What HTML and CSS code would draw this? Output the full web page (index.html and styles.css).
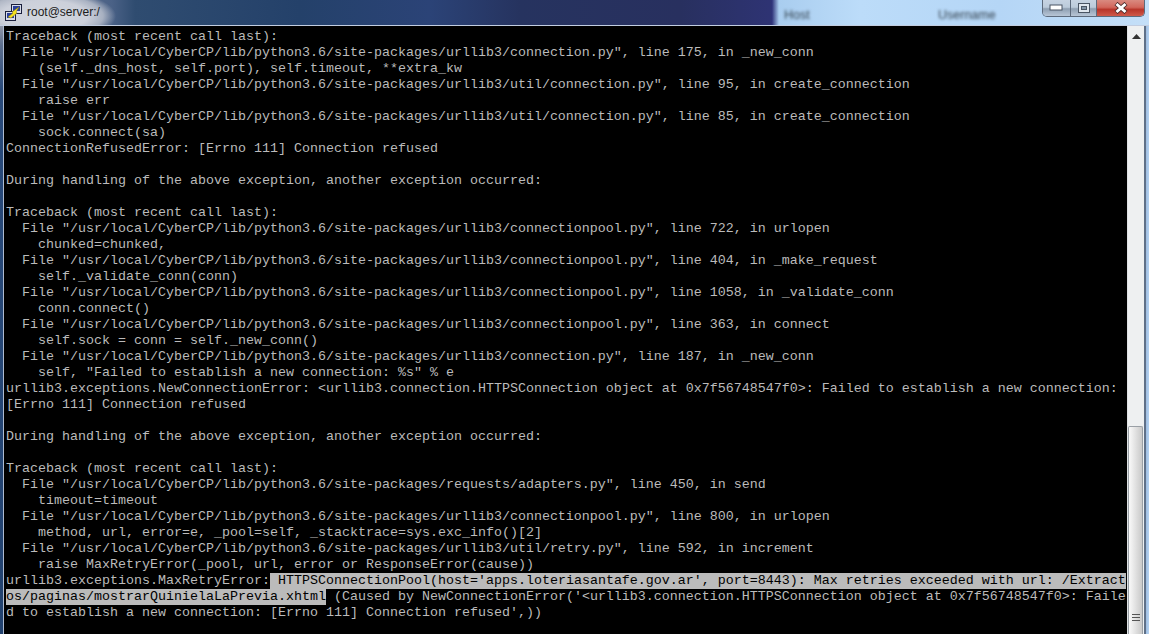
FILE: index.html
```html
<!DOCTYPE html>
<html lang="en">
<head>
<meta charset="utf-8">
<title>root@server:/</title>
<link rel="stylesheet" href="styles.css">
</head>
<body>
<div class="window">
  <header class="titlebar">
    <svg class="app-icon" width="18" height="18" viewBox="0 0 18 18">
      <rect x="6.5" y="0.5" width="10" height="9" fill="#d8dce8" stroke="#1a1f3c"/>
      <rect x="8" y="2" width="7" height="5" fill="#2a3f9a"/>
      <rect x="0.5" y="7.5" width="10" height="9" fill="#d8dce8" stroke="#1a1f3c"/>
      <rect x="2" y="9" width="7" height="5" fill="#2a3f9a"/>
      <path d="M3 13 L8 9 L7 8 L14 3 L11 8 L12 9 L6 14 Z" fill="#f4e21c" stroke="#8a7a10" stroke-width=".5"/>
    </svg>
    <span class="title">root@server:/</span>
    <span class="blur-label host">Host</span>
    <span class="blur-label user">Username</span>
    <div class="controls">
      <div class="ctl min"><svg width="15" height="8" viewBox="0 0 15 8"><rect x="1" y="1" width="12" height="5" fill="#fff" stroke="#4a5564"/></svg></div>
      <div class="ctl max"><svg width="14" height="12" viewBox="0 0 14 12"><rect x="1.5" y="1.5" width="11" height="9" fill="#dfe6ee" stroke="#4a5564"/><rect x="4.5" y="4.5" width="5" height="3" fill="#8496a8" stroke="#4a5564"/></svg></div>
      <div class="ctl close"><svg width="14" height="12" viewBox="0 0 14 12"><path d="M2 1.5 L12 10.5 M12 1.5 L2 10.5" stroke="#4a2a28" stroke-width="4.4"/><path d="M2.5 2 L11.5 10 M11.5 2 L2.5 10" stroke="#fff" stroke-width="3"/></svg></div>
    </div>
  </header>
  <main class="client">
<pre class="terminal">Traceback (most recent call last):
  File "/usr/local/CyberCP/lib/python3.6/site-packages/urllib3/connection.py", line 175, in _new_conn
    (self._dns_host, self.port), self.timeout, **extra_kw
  File "/usr/local/CyberCP/lib/python3.6/site-packages/urllib3/util/connection.py", line 95, in create_connection
    raise err
  File "/usr/local/CyberCP/lib/python3.6/site-packages/urllib3/util/connection.py", line 85, in create_connection
    sock.connect(sa)
ConnectionRefusedError: [Errno 111] Connection refused

During handling of the above exception, another exception occurred:

Traceback (most recent call last):
  File "/usr/local/CyberCP/lib/python3.6/site-packages/urllib3/connectionpool.py", line 722, in urlopen
    chunked=chunked,
  File "/usr/local/CyberCP/lib/python3.6/site-packages/urllib3/connectionpool.py", line 404, in _make_request
    self._validate_conn(conn)
  File "/usr/local/CyberCP/lib/python3.6/site-packages/urllib3/connectionpool.py", line 1058, in _validate_conn
    conn.connect()
  File "/usr/local/CyberCP/lib/python3.6/site-packages/urllib3/connectionpool.py", line 363, in connect
    self.sock = conn = self._new_conn()
  File "/usr/local/CyberCP/lib/python3.6/site-packages/urllib3/connection.py", line 187, in _new_conn
    self, "Failed to establish a new connection: %s" % e
urllib3.exceptions.NewConnectionError: &lt;urllib3.connection.HTTPSConnection object at 0x7f56748547f0&gt;: Failed to establish a new connection:
[Errno 111] Connection refused

During handling of the above exception, another exception occurred:

Traceback (most recent call last):
  File "/usr/local/CyberCP/lib/python3.6/site-packages/requests/adapters.py", line 450, in send
    timeout=timeout
  File "/usr/local/CyberCP/lib/python3.6/site-packages/urllib3/connectionpool.py", line 800, in urlopen
    method, url, error=e, _pool=self, _stacktrace=sys.exc_info()[2]
  File "/usr/local/CyberCP/lib/python3.6/site-packages/urllib3/util/retry.py", line 592, in increment
    raise MaxRetryError(_pool, url, error or ResponseError(cause))
urllib3.exceptions.MaxRetryError:<span class="sel"> HTTPSConnectionPool(host='apps.loteriasantafe.gov.ar', port=8443): Max retries exceeded with url: /Extract</span>
<span class="sel">os/paginas/mostrarQuinielaLaPrevia.xhtml</span> (Caused by NewConnectionError('&lt;urllib3.connection.HTTPSConnection object at 0x7f56748547f0&gt;: Faile
d to establish a new connection: [Errno 111] Connection refused',))</pre>
    <aside class="scrollbar">
      <div class="arrow-btn"><svg width="9" height="5" viewBox="0 0 9 5"><path d="M4.5 0 L9 5 H0 Z" fill="#333"/></svg></div>
      <div class="track"></div>
      <div class="thumb">
        <svg class="grip" width="8" height="9" viewBox="0 0 8 9"><path d="M0 1.5 H8 M0 4.5 H8 M0 7.5 H8" stroke="#555" stroke-width="1.2"/></svg>
      </div>
    </aside>
    <div class="frame-right"></div>
  </main>
</div>
</body>
</html>
```

FILE: styles.css
```css
html, body {
  margin: 0;
  padding: 0;
  height: 100%;
  overflow: hidden;
  background: #000;
}
.window {
  display: flex;
  flex-direction: column;
  width: 1149px;
  height: 634px;
  overflow: hidden;
  background: linear-gradient(180deg, #8f96a8 26px, #5d6f8e 45px, #294a7a 90px, #22426f 634px);
}
.titlebar {
  display: flex;
  align-items: flex-start;
  height: 25px;
  flex: none;
  border-bottom: 1px solid #c2cde0;
  background:
    radial-gradient(ellipse 72px 26px at 44px 16px, #d2d6de 0, #ccd0da 60%, rgba(190, 196, 208, 0.8) 82%, rgba(120, 135, 160, 0) 100%),
    linear-gradient(90deg,
      #7d869c 0,
      #4a6186 112px,
      #2f4c70 135px,
      #24416a 300px,
      #2b4377 430px,
      #26335f 520px,
      #28305f 680px,
      #2e3373 770px,
      #30347a 772px,
      #a9cdef 779px,
      #bcdcf9 860px,
      #b5d6f6 1000px,
      #c4dff8 1149px);
}
.app-icon {
  flex: none;
  margin: 4px 0 0 5px;
}
.title {
  margin: 3px 0 0 4px;
  width: 140px;
  font-size: 12px;
  line-height: 18px;
  color: #1c1c1c;
  font-family: "Liberation Sans", sans-serif;
}
.blur-label {
  font-size: 12.5px;
  line-height: 16px;
  margin-top: 7px;
  color: #35434f;
  filter: blur(1.4px);
  font-family: "Liberation Sans", sans-serif;
}
.host {
  margin-left: 617px;
  width: 154px;
}
.user {
  width: 80px;
}
.controls {
  display: flex;
  margin-left: auto;
  margin-right: 4px;
  height: 16px;
  border: 1px solid #5d6a7c;
  border-top: 0;
  border-radius: 0 0 5px 5px;
  overflow: hidden;
}
.ctl {
  display: flex;
  align-items: center;
  justify-content: center;
  height: 16px;
}
.min, .max {
  background: linear-gradient(#c6d3e2, #bccbdb 45%, #8f9fb2 55%, #b8c6d6);
  border-right: 1px solid #5d6a7c;
}
.min {
  width: 27px;
}
.max {
  width: 25px;
}
.close {
  width: 47px;
  background: linear-gradient(#d98a80, #d2675c 45%, #b8352a 60%, #cf5a4a);
}
.client {
  display: flex;
  flex: 1;
  min-height: 0;
  padding-left: 3px;
}
.terminal {
  flex: none;
  width: 1124px;
  margin: 0;
  padding: 3px 0 0 2px;
  box-sizing: border-box;
  border-left: 1px solid #aebbd0;
  background: #000;
  color: #bbb;
  font-family: "Liberation Mono", "Courier New", monospace;
  font-size: 13.333px;
  line-height: 16px;
  white-space: pre;
  overflow: hidden;
}
.sel {
  display: inline-block;
  height: 16px;
  background: #bbb;
  color: #000;
}
.scrollbar {
  display: flex;
  flex-direction: column;
  flex: none;
  width: 17px;
  background: #eef0f1;
  border-left: 1px solid #dfe2e4;
  box-sizing: border-box;
}
.arrow-btn {
  display: flex;
  align-items: center;
  justify-content: center;
  height: 20px;
  flex: none;
}
.track {
  height: 380px;
  flex: none;
}
.thumb {
  flex: 1;
  display: flex;
  align-items: flex-end;
  justify-content: center;
  padding-bottom: 12px;
  margin: 0 1px 0 0;
  border: 1px solid #9aa0a6;
  border-bottom: 0;
  border-radius: 2px 2px 0 0;
  background: linear-gradient(90deg, #fafafa, #e6e6e6 40%, #c9c9c9);
}
.frame-right {
  flex: 1;
  background: linear-gradient(90deg, #5f7088 0, #5f7088 2px, #9fbde0 2px, #b5d3f2);
}
```
